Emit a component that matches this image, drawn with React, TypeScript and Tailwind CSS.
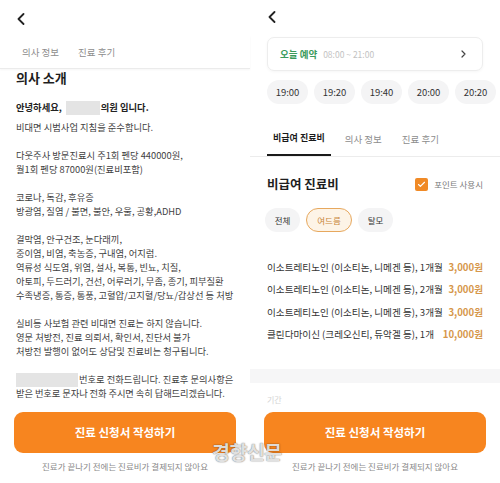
import { Check } from "lucide-react";

const times = ["19:00", "19:20", "19:40", "20:00", "20:20"];

const prices = [
  { name: "이소트레티노인 (이소티논, 니메겐 등), 1개월", price: "3,000원" },
  { name: "이소트레티노인 (이소티논, 니메겐 등), 2개월", price: "3,000원" },
  { name: "이소트레티노인 (이소티논, 니메겐 등), 3개월", price: "3,000원" },
  { name: "클린다마이신 (크레오신티, 듀악겔 등), 1개", price: "10,000원" },
];

function Back() {
  return (
    <svg width="8" height="12" viewBox="0 0 8 12" fill="none">
      <polyline points="6.5,1 1.5,6 6.5,11" stroke="#222" strokeWidth="1.8" strokeLinecap="round" strokeLinejoin="round" />
    </svg>
  );
}

function Bottom() {
  return (
    <div className="h-[78px] shrink-0 bg-white flex flex-col items-center pt-[7px]">
      <button className="w-[222px] h-[41px] rounded-[9px] bg-[#f7851f] text-white text-[11.5px] font-bold">
        진료 신청서 작성하기
      </button>
      <div className="mt-[7px] text-[8.5px] leading-[12px] text-[#8a8a8a]">진료가 끝나기 전에는 진료비가 결제되지 않아요</div>
    </div>
  );
}

function Para({ lines, className = "" }: { lines: string[]; className?: string }) {
  return (
    <div className={"mt-[14.5px] " + className}>
      {lines.map((l, i) => (
        <div key={i}>{l}</div>
      ))}
    </div>
  );
}

function LeftPanel() {
  return (
    <div className="w-[250px] h-full flex flex-col">
      <div className="h-[36px] shrink-0 flex items-center pl-[17px] pt-[1px]">
        <Back />
      </div>
      <div className="h-[33px] shrink-0 flex items-center pl-[16px] gap-[7px] text-[9.5px] text-[#8d8d8d] border-b border-[#ebebeb] shadow-[0_1px_2px_rgba(0,0,0,0.04)]">
        <span className="px-[6px]">의사 정보</span>
        <span className="px-[6px]">진료 후기</span>
      </div>
      <div className="flex-1 overflow-hidden px-[16px] text-[9.3px] leading-[13.8px] text-[#3f3f3f] whitespace-nowrap">
        <div className="text-[13px] leading-[16px] font-bold text-[#1e1e1e] mt-[1px]">의사 소개</div>
        <div className="mt-[15px] font-bold text-[9.3px] text-[#222] flex items-center">
          <span>안녕하세요,</span>
          <span className="inline-block w-[34px] h-[14px] bg-[#e4e4e4] ml-[4px] mr-[1px]" />
          <span>의원 입니다.</span>
        </div>
        <div className="mt-[6px]">비대면 시범사업 지침을 준수합니다.</div>
        <Para lines={["다웃주사 방문진료시 주1회 펜당 440000원,", "월1회 펜당 87000원(진료비포함)"]} />
        <Para lines={["코로나, 독감, 후유증", "방광염, 질염 / 불면, 불안, 우울, 공황,ADHD"]} />
        <Para
          lines={[
            "결막염, 안구건조, 눈다래끼,",
            "중이염, 비염, 축농증, 구내염, 어지럼.",
            "역류성 식도염, 위염, 설사, 복통, 빈뇨, 치질,",
            "아토피, 두드러기, 건선, 어루러기, 무좀, 종기, 피부질환",
            "수족냉증, 통증, 통풍, 고혈압/고지혈/당뇨/갑상선 등 처방",
          ]}
        />
        <Para
          lines={[
            "실비등 사보험 관련 비대면 진료는 하지 않습니다.",
            "영문 처방전, 진료 의뢰서, 확인서, 진단서 불가",
            "처방전 발행이 없어도 상담및 진료비는 청구됩니다.",
          ]}
        />
        <div className="mt-[14.5px]">
          <div className="flex items-center">
            <span className="inline-block w-[62px] h-[14px] bg-[#e4e4e4] mr-[1px]" />
            <span>번호로 전화드립니다. 진료후 문의사항은</span>
          </div>
          <div className="tracking-[-0.1px]">받은 번호로 문자나 전화 주시면 속히 답해드리겠습니다.</div>
        </div>
      </div>
      <Bottom />
    </div>
  );
}

function RightPanel() {
  return (
    <div className="w-[250px] h-full flex flex-col overflow-hidden">
      <div className="h-[34px] shrink-0 flex items-center pl-[18px]">
        <Back />
      </div>
      <div className="px-[17px]">
        <div className="mt-[3px] h-[34px] rounded-[7px] border border-[#ededed] shadow-[0_1px_3px_rgba(0,0,0,0.04)] flex items-center px-[12px]">
          <span className="text-[9.5px] font-bold text-[#3b9b5c]">오늘 예약</span>
          <span className="ml-[6px] text-[8.5px] text-[#c2c2c2]">08:00 ~ 21:00</span>
          <svg className="ml-auto mr-[4px]" width="5" height="8" viewBox="0 0 5 8" fill="none">
            <polyline points="1,1 4,4 1,7" stroke="#444" strokeWidth="1.2" strokeLinecap="round" strokeLinejoin="round" />
          </svg>
        </div>
        <div className="mt-[9px] flex gap-[6px] w-[260px]">
          {times.map((t) => (
            <div key={t} className="w-[41px] h-[24px] shrink-0 rounded-full bg-[#f4f4f5] flex items-center justify-center text-[9.5px] text-[#333]">
              {t}
            </div>
          ))}
        </div>
      </div>
      <div className="mt-[18px] h-[35px] shrink-0 border-b border-[#ececec] flex px-[17px] gap-[8px] text-[9.5px] text-[#8d8d8d]">
        <div className="px-[6px] h-full flex items-center border-b-2 border-[#1a1a1a] font-bold text-[#1a1a1a] text-[9px]">비급여 진료비</div>
        <div className="px-[6px] h-full flex items-center">의사 정보</div>
        <div className="px-[6px] h-full flex items-center">진료 후기</div>
      </div>
      <div className="px-[17px]">
        <div className="mt-[19px] flex items-center justify-between">
          <span className="text-[12.5px] leading-[16px] font-bold text-[#1e1e1e]">비급여 진료비</span>
          <span className="flex items-center text-[8.5px] text-[#7a7a7a]">
            <span className="w-[13px] h-[13px] rounded-[2px] bg-[#f08a26] flex items-center justify-center mr-[6px]">
              <Check size={9} strokeWidth={3} color="#fff" />
            </span>
            포인트 사용시
          </span>
        </div>
        <div className="mt-[16px] -ml-[2px] flex gap-[6px] text-[8.5px]">
          <div className="w-[35px] h-[24px] rounded-full bg-[#f4f4f5] flex items-center justify-center text-[#333]">전체</div>
          <div className="w-[46px] h-[24px] rounded-full bg-[#fdf4e7] border border-[#e7a85e] flex items-center justify-center text-[#c8853a]">여드름</div>
          <div className="w-[35px] h-[24px] rounded-full bg-[#f4f4f5] flex items-center justify-center text-[#333]">탈모</div>
        </div>
        <div className="mt-[24px]">
          {prices.map((p, i) => (
            <div key={i} className="h-[22.4px] flex items-center justify-between text-[9.6px] whitespace-nowrap">
              <span className="text-[#333]">{p.name}</span>
              <span className="font-semibold text-[#d6974b]">{p.price}</span>
            </div>
          ))}
        </div>
      </div>
      <div className="mt-[23px] h-[14px] shrink-0 bg-[#f6f6f7]" />
      <div className="flex-1 overflow-hidden px-[17px] flex flex-col justify-end">
        <div className="text-[8px] leading-[10px] text-[#d4d4d4]">기간</div>
      </div>
      <Bottom />
    </div>
  );
}

export default function App() {
  return (
    <div className="relative w-[500px] h-[483px] overflow-hidden bg-white flex font-['Noto_Sans_CJK_KR','Noto_Sans',sans-serif]">
      <LeftPanel />
      <RightPanel />
      <div className="absolute left-[212px] top-[437px] text-[19.5px] font-bold tracking-[-0.5px] text-[#f2f2f2]/90 [text-shadow:0_0_1px_rgba(0,0,0,0.55),0_0_2px_rgba(0,0,0,0.25)]">
        경향신문
      </div>
    </div>
  );
}
